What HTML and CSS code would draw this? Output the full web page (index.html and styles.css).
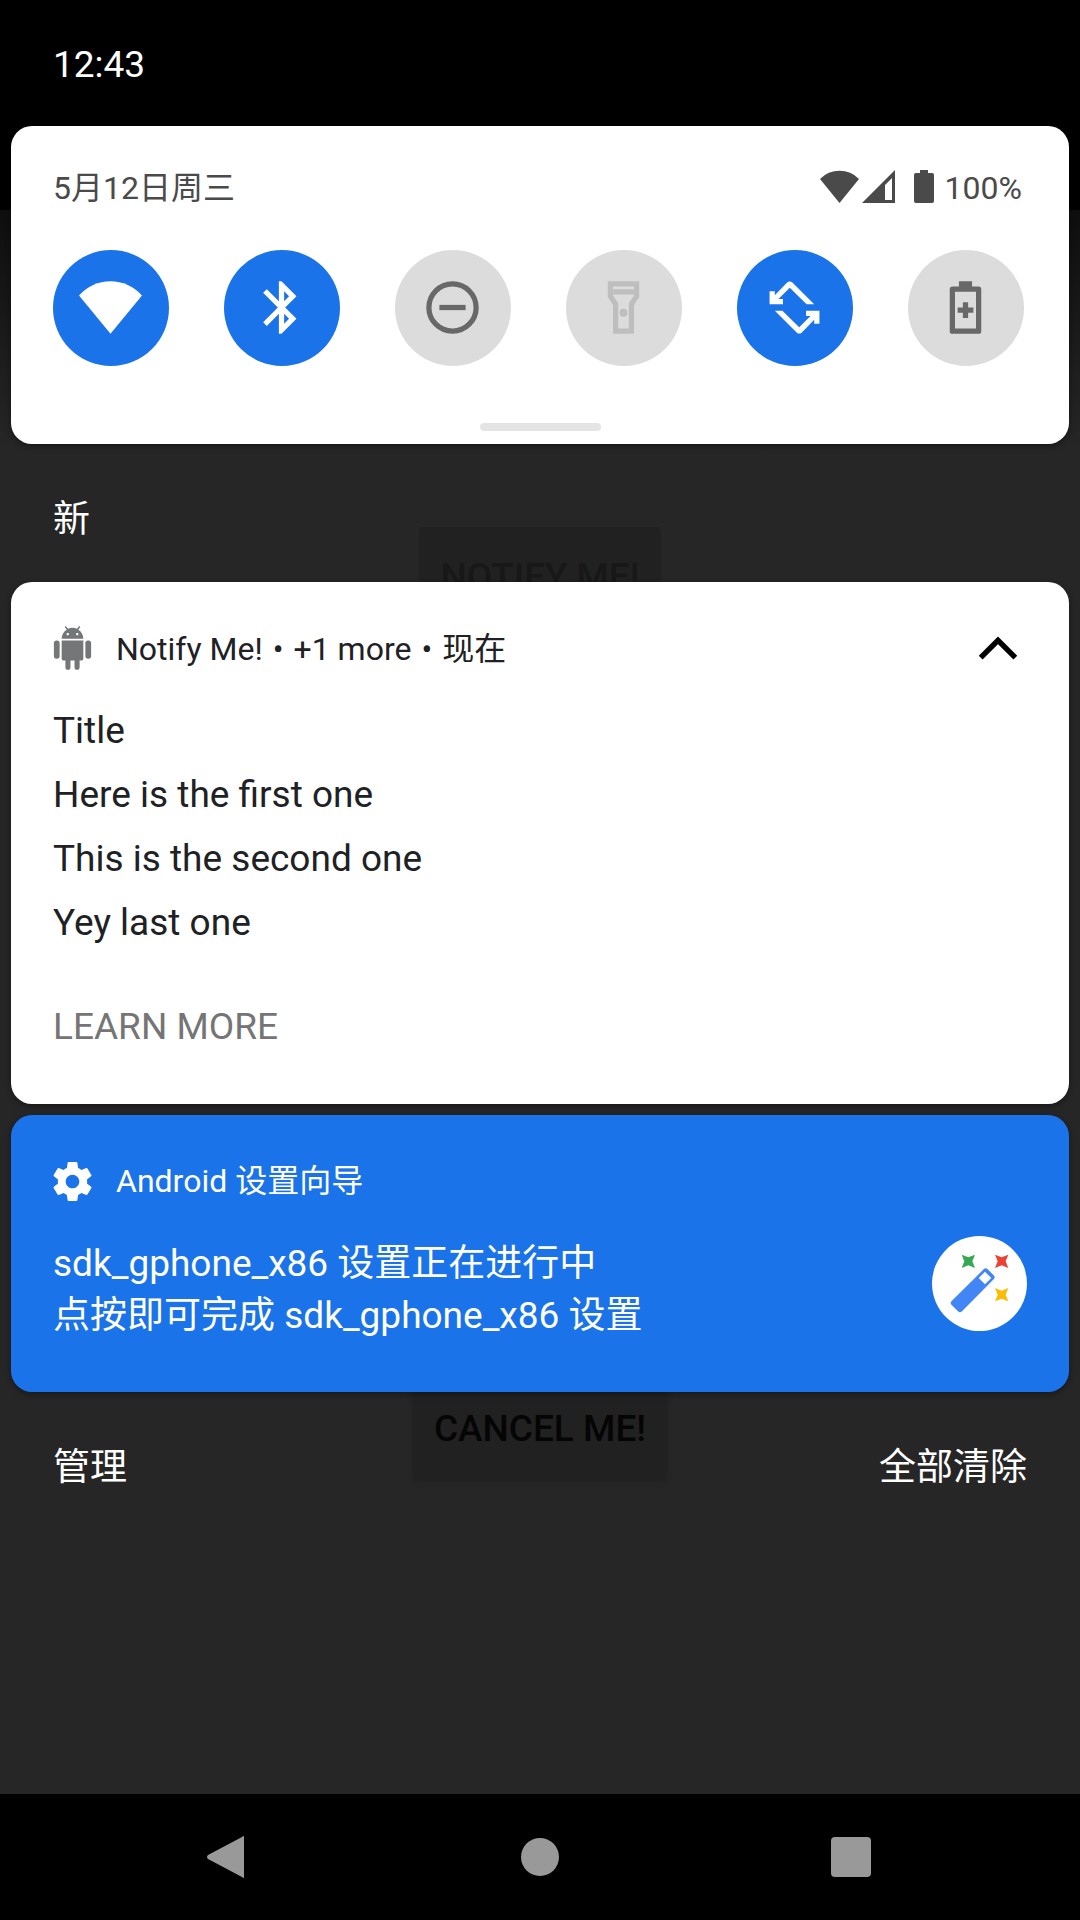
FILE: index.html
```html
<!DOCTYPE html>
<html lang="zh-CN">
<head>
<meta charset="utf-8">
<meta name="viewport" content="width=device-width, initial-scale=1">
<title>通知栏</title>
<link rel="stylesheet" href="styles.css">
</head>
<body>
<div class="screen">
  <div class="app" aria-hidden="true">
    <button class="app-button app-button-disabled" type="button" disabled>NOTIFY ME!</button>
    <button class="app-button" type="button" tabindex="-1">CANCEL ME!</button>
  </div>

  <main class="shade">
    <header class="status-bar"><time>12:43</time></header>

    <section class="card quick-settings">
      <div class="quick-header">
        <span>5月12日周三</span>
        <div class="system-icons">
          <svg class="status-wifi" viewBox="0 0 39 33" aria-hidden="true"><path d="M0 9A27 27 0 0 1 39 9L19.500 33z"/></svg>
          <svg class="status-signal" viewBox="0 0 33 33" aria-hidden="true"><path fill-rule="evenodd" d="M33 0V33H0zM30 8L23 15V30H30z"/></svg>
          <svg class="status-battery" viewBox="0 0 20 33" aria-hidden="true"><path d="M6 0h8v3h4a2 2 0 0 1 2 2v26a2 2 0 0 1-2 2H2a2 2 0 0 1-2-2V5a2 2 0 0 1 2-2h4z"/></svg>
          <span>100%</span>
        </div>
      </div>
      <div class="tiles">
        <button class="tile tile-on" type="button" aria-label="WLAN"><svg viewBox="0 0 24 24"><path d="M0 7.400A16 16 0 0 1 24 7.400L12 22z"/></svg></button>
        <button class="tile tile-on" type="button" aria-label="蓝牙"><svg viewBox="0 0 24 24"><path d="M17.710 7.710L12 2h-1v7.590L6.410 5 5 6.410 10.590 12 5 17.590 6.410 19 11 14.410V22h1l5.710-5.710-4.300-4.290 4.300-4.290zM13 5.830l1.880 1.880L13 9.590V5.830zm1.880 10.460L13 18.170v-3.760l1.880 1.880z"/></svg></button>
        <button class="tile" type="button" aria-label="勿扰"><svg viewBox="0 0 24 24"><circle cx="12" cy="12" r="9" fill="none" stroke="currentColor" stroke-width="2"/><path d="M7 11h10v2H7z"/></svg></button>
        <button class="tile tile-unavailable" type="button" aria-label="手电筒"><svg viewBox="0 0 24 24"><path fill-rule="evenodd" d="M6 2h12v6l-2 3v11H8V11L6 8zM8 4v1h8V4zM8 7v.400l2 3V20h4v-9.600l2-3V7z"/><circle cx="12" cy="14" r="1.500"/></svg></button>
        <button class="tile tile-on" type="button" aria-label="自动旋转"><svg viewBox="0 0 24 24"><path id="turn" d="M19.500 10.800L11.200 2.500Q10.200 1.600 9.200 2.500L4.500 7.300V5.800H2.500V10.800H7.600V8.800H5.900L10.200 4.500L16.600 10.800z"/><use href="#turn" transform="rotate(180 12 12)"/></svg></button>
        <button class="tile" type="button" aria-label="省电模式"><svg viewBox="0 0 24 24"><path fill-rule="evenodd" d="M9.500 2h5v2H17a1 1 0 0 1 1 1v16a1 1 0 0 1-1 1H7a1 1 0 0 1-1-1V5a1 1 0 0 1 1-1h2.500zM8 6v14h8V6z"/><path d="M11 10h2v2h2v2h-2v2h-2v-2H9v-2h2z"/></svg></button>
      </div>
      <div class="drag-handle"></div>
    </section>

    <h2 class="section-title">新</h2>

    <div class="notifications">
      <article class="card notification notification-inbox">
        <div class="notification-header">
          <svg class="icon-android" viewBox="0 0 110 130" aria-hidden="true">
            <path fill-rule="evenodd" d="M23 38C23 26 29 16 38 11L32 3 35 0 42 8Q55 3 68 8L75 0 78 3 72 11C81 16 87 26 87 38zM38 21v6h6v-6zM66 21v6h6v-6z"/>
            <path d="M23 43H87V97Q87 102 82 102H76V122a7 7 0 0 1-15 0V102H49V122a7 7 0 0 1-15 0V102H28Q23 102 23 97z"/>
            <rect x="0" y="43" width="17" height="54" rx="8"/><rect x="93" y="43" width="17" height="54" rx="8"/>
          </svg>
          <div class="meta"><span>Notify Me!</span><span>•</span><span>+1 more</span><span>•</span><span>现在</span></div>
          <button class="collapse" type="button" aria-label="收起"><svg viewBox="0 0 40 24" aria-hidden="true"><path d="M4 20L20 4 36 20" fill="none" stroke="currentColor" stroke-width="5"/></svg></button>
        </div>
        <div class="inbox">
          <p>Title</p>
          <p>Here is the first one</p>
          <p>This is the second one</p>
          <p>Yey last one</p>
        </div>
        <button class="action" type="button">LEARN MORE</button>
      </article>

      <article class="card notification notification-setup">
        <div class="notification-header">
          <svg class="icon-gear" viewBox="2 2 20 20" aria-hidden="true"><path d="M19.430 12.980c.04-.32.07-.64.07-.98s-.03-.66-.07-.98l2.110-1.650c.19-.15.24-.42.12-.64l-2-3.460c-.12-.22-.39-.3-.61-.22l-2.490 1c-.52-.4-1.080-.73-1.690-.98l-.38-2.650C14.460 2.180 14.250 2 14 2h-4c-.25 0-.46.18-.49.42l-.38 2.650c-.61.25-1.170.59-1.690.98l-2.490-1c-.23-.09-.49 0-.61.22l-2 3.460c-.13.22-.07.49.12.64l2.110 1.650c-.04.32-.07.65-.07.98s.03.66.07.98l-2.110 1.650c-.19.15-.24.42-.12.64l2 3.460c.12.22.39.3.61.22l2.490-1c.52.4 1.080.73 1.690.98l.38 2.650c.03.24.24.42.49.42h4c.25 0 .46-.18.49-.42l.38-2.650c.61-.25 1.170-.59 1.690-.98l2.490 1c.23.09.49 0 .61-.22l2-3.460c.12-.22.07-.49-.12-.64l-2.110-1.650zM12 15.500c-1.930 0-3.500-1.570-3.500-3.500s1.570-3.500 3.500-3.500 3.500 1.570 3.500 3.500-1.570 3.500-3.500 3.500z"/></svg>
          <div class="meta"><span>Android 设置向导</span></div>
        </div>
        <div class="setup-body">
          <div class="setup-text">
            <p>sdk_gphone_x86 设置正在进行中</p>
            <p>点按即可完成 sdk_gphone_x86 设置</p>
          </div>
          <svg class="wand" viewBox="0 0 285 285" aria-hidden="true">
            <circle cx="142.500" cy="142.500" r="142.500" fill="#fff"/>
            <path fill="#4285f4" fill-rule="evenodd" d="M155 100Q161 94 167 100L185 118Q191 124 185 130L90 226Q84 232 78 226L59 207Q53 201 59 195zM159 107L140 126 159 145 178 126z"/>
            <path fill="#34a853" d="M89 56L109 64 129 56 121 76 129 96 109 88 89 96 97 76z"/>
            <path fill="#ea4335" d="M189 56L209 64 229 56 221 76 229 96 209 88 189 96 197 76z"/>
            <path fill="#fbbc04" d="M189 156L209 164 229 156 221 176 229 196 209 188 189 196 197 176z"/>
          </svg>
        </div>
      </article>
    </div>

    <footer class="shade-footer">
      <button class="footer-button" type="button">管理</button>
      <button class="footer-button" type="button">全部清除</button>
    </footer>
  </main>

  <nav class="nav-bar" aria-label="系统导航">
    <button type="button" aria-label="返回"><svg viewBox="0 0 42 42"><path d="M37 1V41Q37 43 35 41L1 23Q-1 21 1 19L35 1Q37-1 37 1z"/></svg></button>
    <button type="button" aria-label="主屏幕"><svg viewBox="0 0 42 42"><circle cx="21" cy="21" r="19"/></svg></button>
    <button type="button" aria-label="概览"><svg viewBox="0 0 42 42"><rect x="0" y="1" width="40" height="40" rx="4"/></svg></button>
  </nav>
</div>
</body>
</html>
```

FILE: styles.css
```css
* {
  box-sizing: border-box;
}

body,
h2,
p {
  margin: 0;
}

body {
  background: #262626;
  font-family: Roboto, "Noto Sans CJK SC", sans-serif;
  font-size: 37px;
  line-height: 52px;
}

button {
  margin: 0;
  padding: 0;
  border: 0;
  background: none;
  color: inherit;
  font: inherit;
}

svg {
  display: block;
  flex: none;
  fill: currentColor;
}

/* The app and the notification shade share one grid cell. */
.screen {
  display: grid;
  grid-template-rows: 1fr auto;
  min-height: 100vh;
}

.app,
.shade {
  grid-area: 1 / 1;
}

.app {
  display: flex;
  flex-direction: column;
  align-items: center;
  gap: 752px;
  padding-top: 527px;
  background: linear-gradient(#000 210px, #0e0e0e 210px, #262626 450px);
}

.app-button {
  height: 100px;
  padding: 0 21px;
  border-radius: 5px;
  background: #212121;
  box-shadow: 0 2px 5px #202020;
  color: #050505;
  font-weight: 500;
}

.app-button-disabled {
  box-shadow: none;
  color: #181818;
}

.shade {
  position: relative;
  padding: 0 11px;
}

.status-bar {
  height: 126px;
  padding: 39px 42px 0;
  color: #fff;
}

.card {
  border-radius: 21px;
  background: #fff;
  box-shadow: 0 2px 6px rgba(0, 0, 0, 0.4);
}

.quick-settings {
  padding: 36px 42px 13px;
  color: #4a4a4a;
}

.quick-header {
  display: flex;
  justify-content: space-between;
  align-items: center;
  padding-right: 5px;
  font-size: 32px;
}

.system-icons {
  display: flex;
  align-items: center;
}

.system-icons svg {
  height: 33px;
  margin-bottom: 3px;
}

.status-wifi {
  width: 39px;
  margin-right: 3px;
}

.status-signal {
  width: 33px;
  margin-right: 19px;
}

.status-battery {
  width: 20px;
  margin-right: 11px;
}

.tiles {
  display: flex;
  justify-content: space-between;
  margin-top: 36px;
  padding-right: 3px;
}

.tile {
  display: grid;
  place-items: center;
  width: 116px;
  height: 116px;
  padding: 0 1px 1px 0;
  border-radius: 50%;
  background: #dcdcdc;
  color: #686868;
}

.tile svg {
  width: 63px;
  height: 63px;
}

.tile-on {
  background: #1a73e8;
  color: #fff;
}

.tile-unavailable {
  color: #bebebe;
}

.drag-handle {
  width: 121px;
  height: 8px;
  margin: 57px auto 0;
  border-radius: 4px;
  background: #e4e4e4;
}

.section-title {
  padding: 50px 42px 36px;
  color: #fff;
  font-size: 37px;
  font-weight: 400;
}

.notifications {
  display: flex;
  flex-direction: column;
  gap: 11px;
}

.notification {
  padding: 40px 42px;
  color: #202124;
}

.notification-inbox {
  padding: 41px 42px 51px;
}

.notification-header {
  display: flex;
  align-items: center;
  font-size: 32px;
}

.meta {
  display: flex;
  gap: 10px;
  margin-left: 24px;
}

.icon-android {
  width: 39px;
  height: 44px;
  margin-bottom: 3px;
  color: #757678;
}

.icon-gear {
  width: 39px;
  height: 39px;
}

.collapse {
  margin-left: auto;
  padding: 0 7px;
  color: #000;
}

.collapse svg {
  width: 44px;
  height: 26px;
}

.inbox {
  padding-top: 24px;
  line-height: 64px;
}

.action {
  display: block;
  margin-top: 46px;
  color: #757575;
}

.notification-setup {
  background: #1a73e8;
  color: #fff;
}

.setup-body {
  display: flex;
  justify-content: space-between;
  align-items: flex-start;
  padding: 29px 0 10px;
}

.setup-text {
  padding-top: 2px;
}

.wand {
  width: 95px;
  height: 95px;
}

.shade-footer {
  display: flex;
  justify-content: space-between;
  padding: 50px 42px;
  color: #fff;
}

.nav-bar {
  display: flex;
  justify-content: space-between;
  align-items: center;
  height: 126px;
  padding: 0 207px;
  background: #000;
  color: #999;
}

.nav-bar svg {
  width: 42px;
  height: 42px;
}
```
